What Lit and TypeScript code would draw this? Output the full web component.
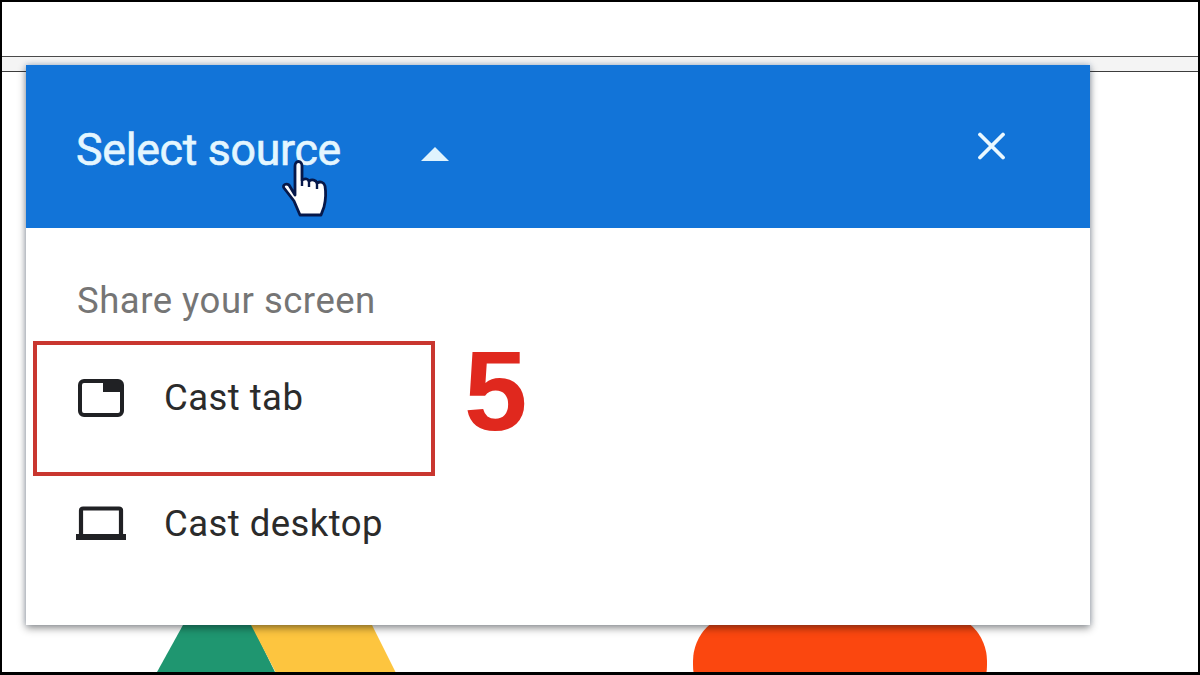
import { LitElement, html, css } from "lit";
import { customElement } from "lit/decorators.js";

@customElement("app-root")
export class AppRoot extends LitElement {
  static styles = css`
    :host { display: block; width: 1200px; height: 675px; font-family: Roboto, "Liberation Sans", sans-serif; background: #fff; }
    .frame { box-sizing: border-box; width: 1200px; height: 675px; border: solid #000; border-width: 2px 2px 3px 2px; overflow: hidden; background: #fff; }
    .top { height: 54px; }
    .strip { box-sizing: border-box; height: 16px; background: #f4f4f4; border-top: 1px solid #4a4a4a; border-bottom: 1px solid #3c3c3c; }
    .panel { position: relative; z-index: 1; box-sizing: border-box; width: 1064px; height: 560px; margin: -7px 0 0 24px; background: #fff; box-shadow: 0 3px 8px rgba(0,0,0,.45), 0 -1px 5px rgba(60,120,200,.22); }
    .head { box-sizing: border-box; height: 163px; background: #1274d8; display: flex; align-items: center; padding: 0 0 0 50px; color: #e4f6ff; }
    .title { width: 345px; font-size: 44.7px; letter-spacing: -0.3px; line-height: 1; margin-top: 8px; -webkit-text-stroke: 0.6px #e4f6ff; }
    .tri { width: 28px; height: 14px; margin-top: 14px; }
    .spacer { flex: 1; }
    .x { width: 29px; height: 28px; margin: -2px 84px 0 0; }
    .cursor { position: absolute; left: 243px; top: 86px; width: 70px; height: 70px; }
    .body { padding: 50px 0 0 7px; }
    .sub { margin-left: 44px; height: 46px; font-size: 36.5px; line-height: 46px; color: #757575; letter-spacing: 0.5px; }
    .hl { display: flex; align-items: flex-start; margin-top: 17px; }
    .box { box-sizing: border-box; width: 402px; height: 135px; border: 4px solid #c9362f; padding: 31px 0 0 41px; display: flex; align-items: flex-start; }
    .num { margin: -5px 0 0 29px; font-family: "Liberation Sans", Arial, sans-serif; font-weight: 700; font-size: 114px; line-height: 110px; color: #e0281e; }
    .row { display: flex; align-items: center; font-size: 36.5px; line-height: 44px; color: #2b2b2b; letter-spacing: 0.45px; height: 44px; }
    .row svg { display: block; flex: none; }
    .tab { width: 46px; height: 38px; margin-right: 40px; }
    .desk { margin: 26px 0 0 42px; }
    .lap { width: 52px; height: 36px; margin-right: 37px; }
    .logos { display: flex; align-items: flex-start; padding-left: 148px; }
    .drive { width: 250px; height: 48px; display: block; }
    .red { box-sizing: border-box; width: 294px; height: 100px; margin: -12px 0 0 293px; border-radius: 48px; background: #fb470f; }
  `;

  render() {
    return html`<div class="frame">
      <div class="top"></div>
      <div class="strip"></div>
      <div class="panel">
        <div class="head">
          <div class="title">Select source</div>
          <svg class="tri" viewBox="0 0 28 14"><path d="M14 0 28 14H0Z" fill="#dff3fd"/></svg>
          <div class="spacer"></div>
          <svg class="x" viewBox="0 0 29 28"><path d="M3 2.500 26 25.500M26 2.500 3 25.500" stroke="#eaf8ff" stroke-width="3.800" stroke-linecap="round" fill="none"/></svg>
          <svg class="cursor" viewBox="0 0 70 70" aria-hidden="true">
            <path d="M26 44V15c0-6 7-6 7 0v14c4-2 6-1 7 1 3-2 7-1 8 2 3-2 7-1 8 3 1 6 1 13-1 21l-3 8H31L25 50 15 37c-2-3 2-5 5-3z" fill="#fff" stroke="#06184a" stroke-width="2.800" stroke-linejoin="round"/>
            <path d="M33 29v6M40 30v6M48 32v6" stroke="#06184a" stroke-width="2.400" fill="none"/>
          </svg>
        </div>
        <div class="body">
          <div class="sub">Share your screen</div>
          <div class="hl">
            <div class="box">
              <div class="row">
                <svg class="tab" viewBox="0 0 46 38"><path d="M6 2H40A4 4 0 0 1 44 6V32A4 4 0 0 1 40 36H6A4 4 0 0 1 2 32V6A4 4 0 0 1 6 2Z" fill="#fff" stroke="#202124" stroke-width="4"/><path d="M25 2H44V13H25Z" fill="#202124"/></svg>
                <span>Cast tab</span>
              </div>
            </div>
            <div class="num">5</div>
          </div>
          <div class="row desk">
            <svg class="lap" viewBox="0 0 52 36"><path d="M8 2.500H44A2 2 0 0 1 46 4.500V30H6V4.500A2 2 0 0 1 8 2.500Z" fill="#fff" stroke="#202124" stroke-width="4.200"/><path d="M1 28H51V34H1Z" fill="#202124"/></svg>
            <span>Cast desktop</span>
          </div>
        </div>
      </div>
      <div class="logos">
        <svg class="drive" viewBox="0 0 250 48">
          <path d="M33 0H102L125 47H7Z" fill="#1f9670"/>
          <path d="M101 0H222L246 48H126Z" fill="#fdc53f"/>
        </svg>
        <div class="red"></div>
      </div>
    </div>`;
  }
}
